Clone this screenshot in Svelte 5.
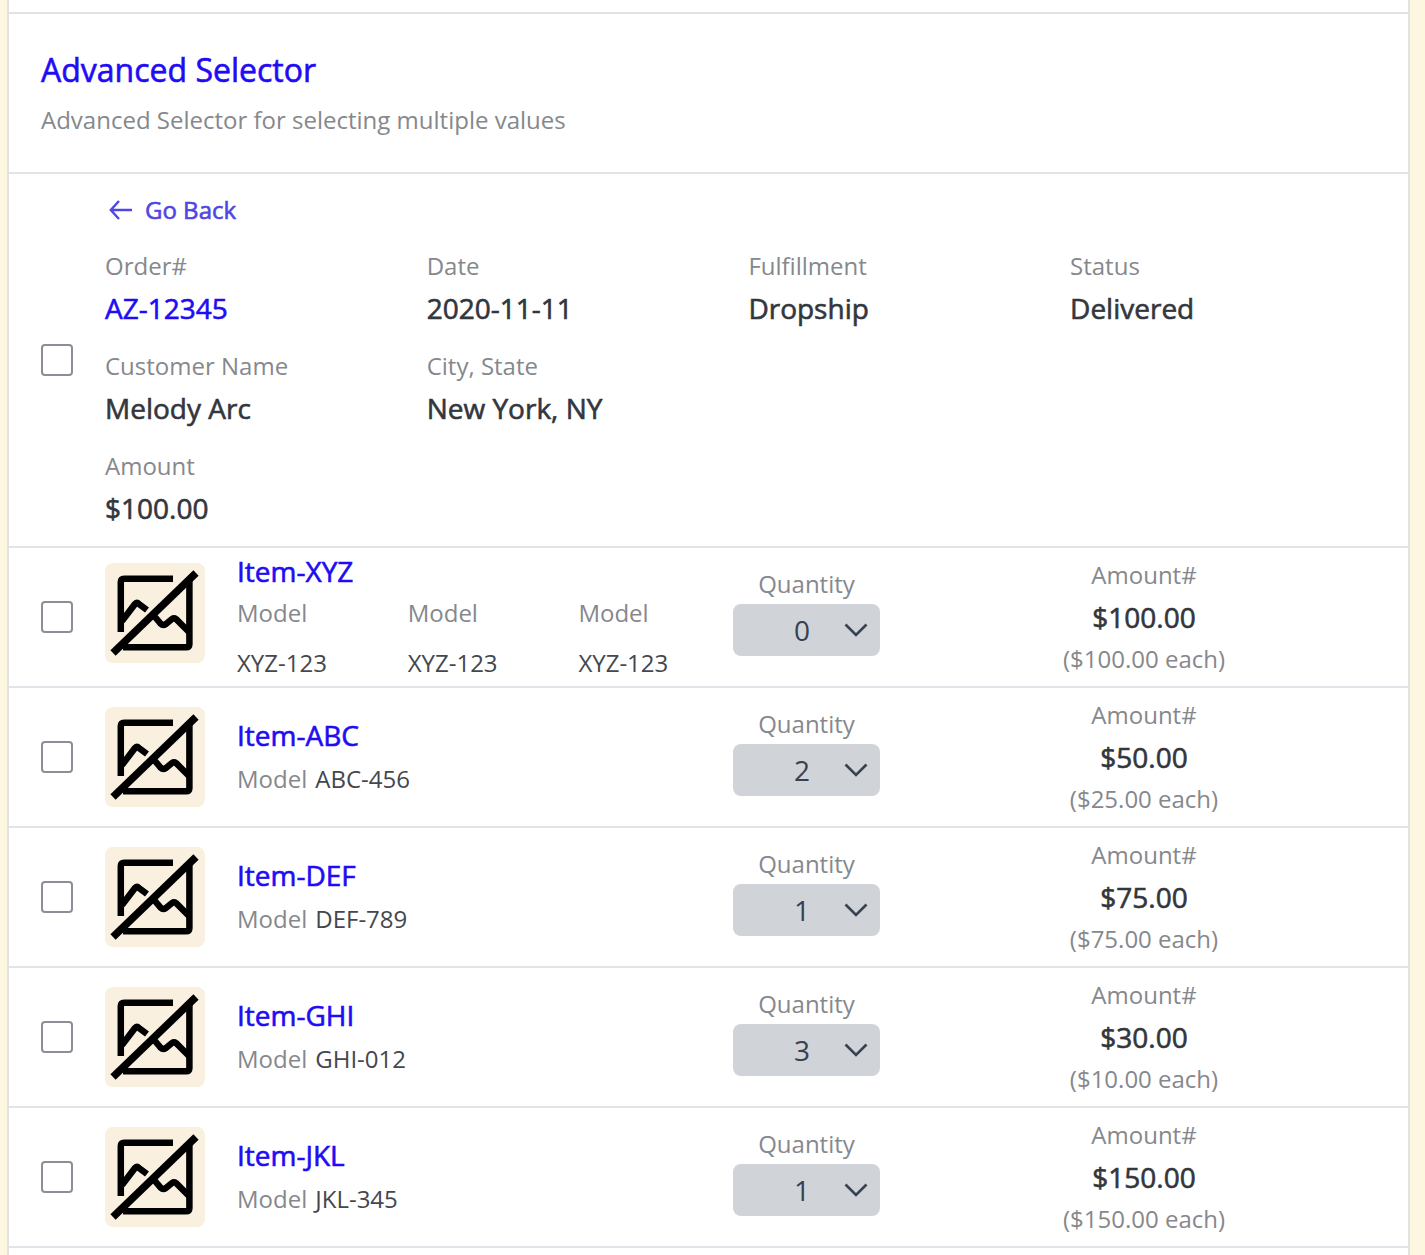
<script>
  const order = [
    [
      { label: "Order#", value: "AZ-12345", link: true },
      { label: "Date", value: "2020-11-11" },
      { label: "Fulfillment", value: "Dropship" },
      { label: "Status", value: "Delivered" }
    ],
    [
      { label: "Customer Name", value: "Melody Arc" },
      { label: "City, State", value: "New York, NY" }
    ],
    [{ label: "Amount", value: "$100.00" }]
  ];

  const items = [
    { name: "Item-XYZ", qty: 0, total: "$100.00", each: "($100.00 each)", models: ["XYZ-123", "XYZ-123", "XYZ-123"] },
    { name: "Item-ABC", qty: 2, total: "$50.00", each: "($25.00 each)", model: "ABC-456" },
    { name: "Item-DEF", qty: 1, total: "$75.00", each: "($75.00 each)", model: "DEF-789" },
    { name: "Item-GHI", qty: 3, total: "$30.00", each: "($10.00 each)", model: "GHI-012" },
    { name: "Item-JKL", qty: 1, total: "$150.00", each: "($150.00 each)", model: "JKL-345" }
  ];
</script>

<div class="page">
  <div class="panel">
    <header class="head">
      <h1>Advanced Selector</h1>
      <p>Advanced Selector for selecting multiple values</p>
    </header>

    <section class="order">
      <div class="check-col"><span class="check"></span></div>
      <div class="order-body">
        <a class="back" href="#back">
          <svg width="24" height="24" viewBox="0 0 24 24" fill="none" stroke="currentColor" stroke-width="2.4">
            <path d="M10 4L1.8 13l8.2 9M1.8 13H23" />
          </svg>
          Go Back
        </a>
        {#each order as row}
          <div class="order-row">
            {#each row as f}
              <div class="field">
                <div class="label">{f.label}</div>
                <div class="value" class:link={f.link}>{f.value}</div>
              </div>
            {/each}
          </div>
        {/each}
      </div>
    </section>

    {#each items as item}
      <section class="item" class:tall={item.models}>
        <div class="check-col"><span class="check"></span></div>
        <div class="thumb">
          <svg width="100" height="100" viewBox="0 0 100 100" fill="none" stroke="#000" stroke-width="6.5">
            <path d="M15.8 69V19q0-3.3 3.3-3.3H68" />
            <path d="M84.4 18V81q0 3.3-3.3 3.3H18" />
            <path d="M17 58L30 41q2-2 4 0l8 6" />
            <path d="M50 54l6 7q2 2 5 0l6-5q2-1.5 4 0l13 13" />
            <path d="M8 90L91 10" stroke-width="7.5" />
          </svg>
        </div>
        <div class="info">
          <div class="name">{item.name}</div>
          {#if item.models}
            <div class="models">
              {#each item.models as m}
                <div class="model-col">
                  <div class="model-label">Model</div>
                  <div class="model-value">{m}</div>
                </div>
              {/each}
            </div>
          {:else}
            <div class="model-line"><span class="model-label">Model</span><span class="model-value">{item.model}</span></div>
          {/if}
        </div>
        <div class="qty">
          <div class="qty-label">Quantity</div>
          <div class="select">
            <span>{item.qty}</span>
            <svg width="24" height="24" viewBox="0 0 24 24" fill="none" stroke="#374151" stroke-width="2.6">
              <path d="M1.5 6.5L12 17L22.5 6.5" />
            </svg>
          </div>
        </div>
        <div class="amount">
          <div class="amount-label">Amount#</div>
          <div class="amount-value">{item.total}</div>
          <div class="amount-each">{item.each}</div>
        </div>
      </section>
    {/each}
    <div class="end"></div>
  </div>
</div>

<style>
  :global(body) {
    background: #fdf6e0;
    font-family: "Open Sans", "Noto Sans", sans-serif;
  }

  .page {
    padding: 0 15px 0 7px;
    height: 1255px;
    overflow: hidden;
  }

  .panel {
    background: #fff;
    border-left: 2px solid #e2e2e2;
    border-right: 2px solid #e2e2e2;
    min-height: 1255px;
    padding-top: 12px;
    box-sizing: border-box;
  }

  .head {
    padding: 36px 32px 32px;
    height: 160px;
    box-sizing: border-box;
    border-top: 2px solid #e2e2e2;
  }

  h1 {
    margin: 0;
    font-size: 32px;
    line-height: 40px;
    font-weight: 400;
    -webkit-text-stroke: 0.6px currentColor;
    color: #1f0cf5;
  }

  .head p {
    margin: 14px 0 0;
    font-size: 24px;
    line-height: 32px;
    color: #86888c;
  }

  .order {
    display: flex;
    align-items: center;
    border-top: 2px solid #e1e4e8;
    height: 374px;
    box-sizing: border-box;
  }

  .check-col {
    width: 96px;
    padding-left: 32px;
    box-sizing: border-box;
    flex: none;
    display: flex;
  }

  .check {
    width: 32px;
    height: 32px;
    box-sizing: border-box;
    border: 2px solid #8b8e96;
    border-radius: 4px;
    display: block;
  }

  .order-body {
    flex: 1;
    padding-bottom: 1px;
  }

  .back {
    display: flex;
    align-items: center;
    gap: 12px;
    margin-left: 4px;
    height: 32px;
    font-size: 24px;
    color: #4f46e5;
    -webkit-text-stroke: 0.6px currentColor;
    text-decoration: none;
  }

  .order-row {
    display: flex;
    margin-top: 25px;
  }

  .order-row + .order-row {
    margin-top: 24px;
  }

  .field {
    width: 321.7px;
  }

  .label {
    font-size: 24px;
    line-height: 32px;
    color: #86888c;
  }

  .value {
    margin-top: 8px;
    font-size: 28px;
    line-height: 36px;
    -webkit-text-stroke: 0.6px currentColor;
    color: #33363d;
  }

  .value.link {
    color: #1f0cf5;
  }

  .item {
    display: flex;
    align-items: center;
    border-top: 2px solid #e1e4e8;
    height: 140px;
    box-sizing: border-box;
  }

  .thumb {
    width: 100px;
    height: 100px;
    border-radius: 8px;
    background: #faf0e0;
    flex: none;
  }

  .item.tall .thumb {
    margin-bottom: 8px;
  }

  .thumb svg {
    display: block;
  }

  .info {
    width: 528px;
    padding-left: 32px;
    padding-bottom: 2px;
    box-sizing: border-box;
    flex: none;
  }

  .item.tall .info {
    padding-bottom: 3px;
  }

  .name {
    font-size: 28px;
    line-height: 36px;
    -webkit-text-stroke: 0.6px currentColor;
    color: #1f0cf5;
  }

  .models {
    display: flex;
    margin-top: 8px;
  }

  .model-col {
    width: 170.7px;
    flex: none;
  }

  .model-col .model-value {
    margin-top: 18px;
  }

  .model-line {
    margin-top: 10px;
    display: flex;
    gap: 8px;
  }

  .model-label {
    font-size: 24px;
    line-height: 32px;
    color: #86888c;
  }

  .model-value {
    font-size: 24px;
    line-height: 32px;
    color: #44474e;
  }

  .qty {
    width: 147px;
    flex: none;
    text-align: center;
    padding-bottom: 10px;
  }

  .qty-label {
    font-size: 24px;
    line-height: 32px;
    color: #86888c;
  }

  .select {
    margin-top: 4px;
    height: 52px;
    border-radius: 8px;
    background: #d0d3d8;
    display: flex;
    align-items: center;
    justify-content: flex-end;
    padding-right: 12px;
    gap: 34px;
    font-size: 28px;
    color: #374151;
  }

  .amount {
    width: 528px;
    flex: none;
    text-align: center;
  }

  .amount-label,
  .amount-each {
    font-size: 24px;
    line-height: 32px;
    color: #86888c;
  }

  .amount-value {
    margin: 8px 0;
    font-size: 28px;
    line-height: 36px;
    -webkit-text-stroke: 0.6px currentColor;
    color: #33363d;
  }

  .end {
    border-top: 2px solid #e1e4e8;
  }
</style>
